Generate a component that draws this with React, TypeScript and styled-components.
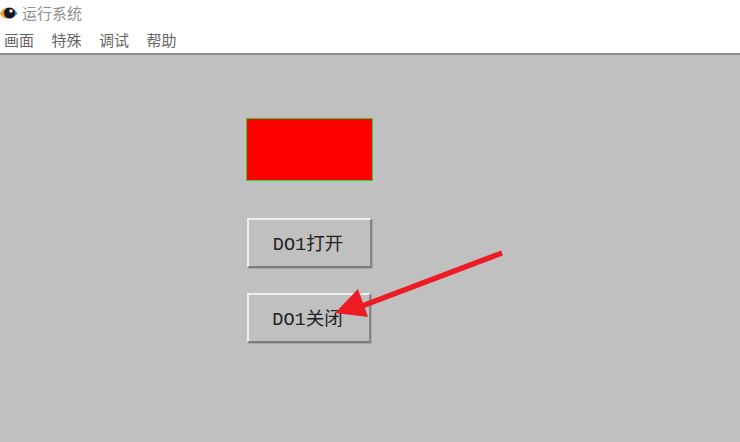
import React from "react";
import styled, { createGlobalStyle } from "styled-components";

const Global = createGlobalStyle`
  html, body { margin: 0; padding: 0; background: #fff; }
  body { width: 740px; height: 442px; overflow: hidden; font-family: "Noto Sans CJK SC", sans-serif; }
`;

const Page = styled.div`
  position: relative;
  width: 740px;
  height: 442px;
  display: flex;
  flex-direction: column;
  overflow: hidden;
`;

const TitleBar = styled.div`
  height: 29px;
  display: flex;
  align-items: center;
  background: #fff;
  padding-bottom: 3px;
  box-sizing: border-box;
`;

const TitleText = styled.span`
  margin-left: 4px;
  font-size: 15px;
  line-height: 20px;
  color: #8f8f8f;
`;

const MenuBar = styled.div`
  height: 24px;
  display: flex;
  gap: 17.5px;
  padding: 0 0 2px 4px;
  box-sizing: border-box;
  align-items: center;
  background: #fff;
`;

const MenuItem = styled.span`
  font-size: 15px;
  line-height: 20px;
  color: #666;
  width: 30px;
  white-space: nowrap;
`;

const Canvas = styled.div`
  flex: 1;
  background: #c0c0c0;
  border-top: 2px solid #8c8c8c;
  display: flex;
  flex-direction: column;
  padding: 63px 0 0 246px;
  box-sizing: border-box;
`;

const Indicator = styled.div`
  width: 126.5px;
  height: 63px;
  box-sizing: border-box;
  background: #ff0000;
  border: 1.5px solid #2ed42e;
`;

const PanelButton = styled.button<{ $w: number; $h: number; $top: number }>`
  width: ${(p) => p.$w}px;
  height: ${(p) => p.$h}px;
  margin: ${(p) => p.$top}px 0 0 1px;
  box-sizing: border-box;
  background: #c0c0c0;
  border: 2px solid;
  border-color: #efefef #848484 #7c7c7c #efefef;
  box-shadow: 1px 1px 0 #a8a8a8;
  padding: 5px 3px 0 0;
  font-family: "Liberation Mono", "Noto Sans CJK SC", monospace;
  font-size: 18.5px;
  line-height: 20px;
  color: #222;
`;

const ArrowOverlay = styled.svg`
  position: absolute;
  left: 0;
  top: 0;
  pointer-events: none;
`;

const Eye = () => (
  <svg width="18" height="14" viewBox="0 0 18 14" aria-hidden="true">
    <path d="M0 7.5C2 3.5 4.5 2 8 1.5L7 12.5C4 12.5 1.5 10.5 0 7.5Z" fill="#f09a2a" />
    <path d="M11 1.5C13.5 2.5 16 5 17.5 7.5C16 9.5 13.5 11.5 11 12.5Z" fill="#3b8fd6" />
    <ellipse cx="9.5" cy="7" rx="5.5" ry="5.5" fill="#161616" />
    <circle cx="11" cy="5" r="1.8" fill="#eeeeee" />
  </svg>
);

export default function App() {
  return (
    <Page>
      <Global />
      <TitleBar>
        <Eye />
        <TitleText>运行系统</TitleText>
      </TitleBar>
      <MenuBar>
        <MenuItem>画面</MenuItem>
        <MenuItem>特殊</MenuItem>
        <MenuItem>调试</MenuItem>
        <MenuItem>帮助</MenuItem>
      </MenuBar>
      <Canvas>
        <Indicator />
        <PanelButton $w={125} $h={50} $top={37}>DO1打开</PanelButton>
        <PanelButton $w={124} $h={50} $top={25}>DO1关闭</PanelButton>
      </Canvas>
      <ArrowOverlay width="740" height="442" viewBox="0 0 740 442">
        <line x1="502" y1="253" x2="362" y2="306" stroke="#ed1c24" strokeWidth="5.5" />
        <polygon points="335,313 358,289 368,317" fill="#ed1c24" />
      </ArrowOverlay>
    </Page>
  );
}
